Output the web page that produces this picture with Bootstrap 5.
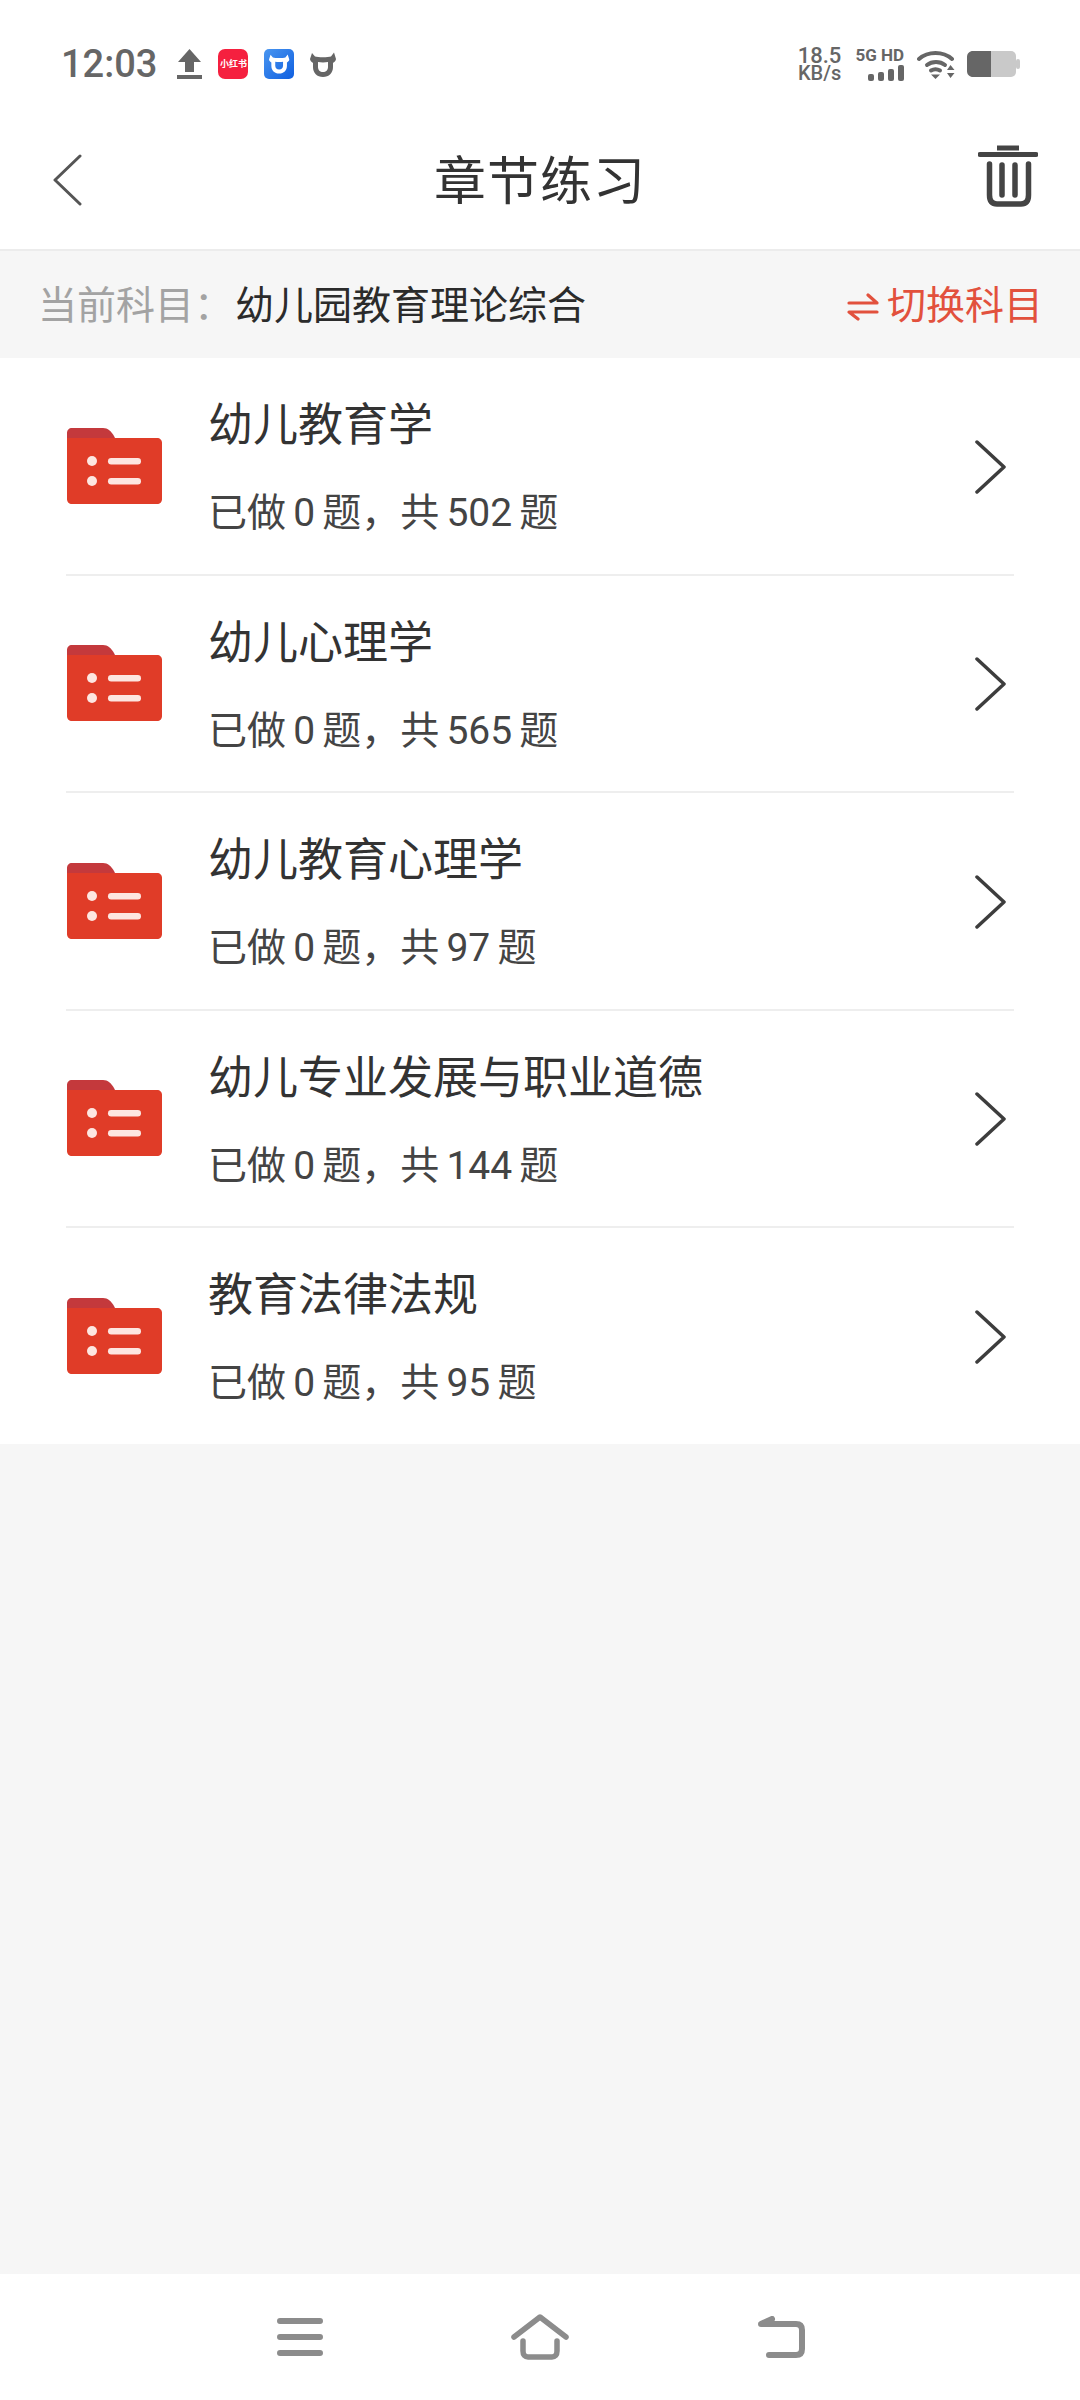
<!DOCTYPE html>
<html lang="zh-CN">
<head>
    <meta charset="UTF-8">
    <meta name="viewport" content="width=device-width, initial-scale=1.0">
    <title>章节练习</title>
    <link href="https://cdn.jsdelivr.net/npm/bootstrap@5.3.0/dist/css/bootstrap.min.css" rel="stylesheet">
    <script src="https://cdn.jsdelivr.net/npm/bootstrap@5.3.0/dist/js/bootstrap.bundle.min.js"></script>
    <style>
        html, body { height: 2400px; }
        body {
            background: #f6f6f6;
            font-family: "Roboto", "Noto Sans CJK SC", sans-serif;
            color: #333;
        }
        .screen { width: 1080px; height: 2400px; }
        .status-bar { height: 120px; background: #fff; padding: 8px 60px 0 61px; color: #666; }
        .status-time { font-size: 38px; font-weight: 500; line-height: 1; color: #666; margin-right: 4px; }
        .status-apps { gap: 16px; }
        .net-speed { font-size: 20px; font-weight: 500; line-height: 17px; text-align: center; margin-right: 14px; color: #666; }
        .net-speed b { display: block; font-size: 22px; font-weight: 500; line-height: 19px; }
        .sim-type { font-size: 17px; font-weight: 700; line-height: 16px; margin-right: 13px; text-align: right; white-space: nowrap; }
        .sim-type svg { margin-top: 2px; }
        .wifi-icon { margin-right: 12px; }
        .xhs-badge { width: 30px; height: 30px; border-radius: 7px; background: #f5203f; color: #fff; font-size: 9px; font-weight: 700; line-height: 30px; text-align: center; white-space: nowrap; }
        .top-bar { height: 131px; background: #fff; border-bottom: 2px solid #ececec; padding: 0 42px 10px 52px; }
        .top-title { top: 63px; font-size: 52px; line-height: 1; color: #333; letter-spacing: 1px; }
        .trash-icon { margin-bottom: 8px; }
        .subject-bar { height: 107px; background: #f6f6f6; padding: 4px 37px 0 38px; font-size: 39px; }
        .subject-label { color: #a3a3a3; width: 197px; }
        .subject-name { color: #2b2b2b; }
        .subject-switch { color: #e2513d; gap: 8px; }
        .chapter-list { background: #fff; height: 1086px; padding: 0 66px; }
        .chapter-row { height: 217.5px; border-bottom: 2px solid #eee; }
        .folder-slot { width: 141px; margin-left: 1px; padding-top: 2px; }
        .chapter-text { padding-top: 5px; }
        .chapter-name { font-size: 45px; line-height: 50px; color: #333; margin-bottom: 40px; }
        .chapter-stat { font-size: 39px; line-height: 44px; color: #444; word-spacing: -2.5px; }
        .chapter-arrow { margin-right: 6px; margin-top: 2px; }
        .nav-fill-space { flex: 1 1 auto; background: #f6f6f6; }
        .bottom-nav { height: 126px; background: #fff; padding: 0 275px 0 277px; }
    </style>
</head>
<body class="m-0">
<div class="screen d-flex flex-column">

    <div class="status-bar d-flex align-items-center justify-content-between">
        <div class="d-flex align-items-center status-apps">
            <span class="status-time">12:03</span>
            <svg width="25" height="30" viewBox="0 0 25 30"><path fill="#666" d="M12.500 0 24 13H17V23H8V13H1Z"/><rect y="26" width="25" height="4" fill="#666"/></svg>
            <span class="xhs-badge">小红书</span>
            <svg width="30" height="30" viewBox="0 0 30 30">
                <defs><linearGradient id="blueApp" x1="0" y1="0" x2="1" y2="1"><stop offset="0" stop-color="#4a96f0"/><stop offset="1" stop-color="#0f5fe0"/></linearGradient></defs>
                <rect width="30" height="30" rx="5" fill="url(#blueApp)"/>
                <g transform="translate(5 5) scale(.78)"><use href="#cowIcon" fill="#fff"/></g>
            </svg>
            <svg width="26" height="25" viewBox="0 0 26 25"><use href="#cowIcon" fill="#666"/></svg>
        </div>
        <div class="d-flex align-items-center">
            <div class="net-speed"><b>18.5</b>KB/s</div>
            <div class="sim-type">
                5G HD
                <svg class="d-block ms-auto" width="36" height="16" viewBox="0 0 36 16"><rect y="9" width="6" height="7" rx="2" fill="#666"/><rect x="10" y="7" width="6" height="9" rx="2" fill="#666"/><rect x="20" y="4" width="6" height="12" rx="2" fill="#666"/><rect x="30" y="0" width="6" height="16" rx="2" fill="#666"/></svg>
            </div>
            <svg class="wifi-icon" width="38" height="29" viewBox="0 0 38 29">
                <g fill="none" stroke="#666" stroke-width="4" stroke-linecap="round">
                    <path d="M2 9C11 1 26 1 35 9"/>
                    <path d="M10 15C15 11 23 11 28 15"/>
                    <path d="M14 20.500C16.500 19 20.500 19 23 20.500"/>
                </g>
                <path fill="#666" d="M14 24.500H23L18.500 29ZM30 20 33.500 15 37.500 20ZM30 23H37.500L33.500 28Z"/>
            </svg>
            <svg width="53" height="26" viewBox="0 0 53 26">
                <rect x="20" width="29" height="26" rx="5" fill="#c9c9c9"/>
                <path fill="#666" d="M6 0H24V26H6C2.500 26 0 23.500 0 20V6C0 2.500 2.500 0 6 0Z"/>
                <rect x="49" y="8" width="4" height="10" rx="2" fill="#c9c9c9"/>
            </svg>
        </div>
    </div>

    <div class="top-bar d-flex align-items-center justify-content-between position-relative">
        <svg width="32" height="52" viewBox="0 0 32 52"><path fill="none" stroke="#555" stroke-width="3" stroke-linecap="round" stroke-linejoin="round" d="M28 2 3 26 28 50"/></svg>
        <span class="top-title position-absolute start-50 translate-middle">章节练习</span>
        <svg class="trash-icon" width="60" height="62" viewBox="0 0 60 62">
            <g fill="none" stroke="#444" stroke-linecap="round" stroke-linejoin="round">
                <path stroke-width="5" d="M2 9.500H58"/>
                <path stroke-width="5" d="M19 3H41" stroke-linecap="butt"/>
                <path stroke-width="5.500" d="M11.500 19V50C11.500 56 14 59 19 59H43C48 59 50.500 56 50.500 50V19"/>
                <path stroke-width="5.500" d="M24 20V50M37 20V50"/>
            </g>
        </svg>
    </div>

    <div class="subject-bar d-flex align-items-center">
        <span class="subject-label">当前科目：</span>
        <span class="subject-name">幼儿园教育理论综合</span>
        <span class="subject-switch d-flex align-items-center ms-auto">
            <svg width="32" height="28" viewBox="0 0 32 28"><g fill="none" stroke="#e2513d" stroke-width="3.200" stroke-linecap="round" stroke-linejoin="round"><path d="M2 10H30L21 2"/><path d="M30 19H2L11 26"/></g></svg>
            切换科目
        </span>
    </div>

    <div class="chapter-list">
        <div class="chapter-row d-flex align-items-center">
            <div class="folder-slot">
                <svg class="d-block" width="96" height="78" viewBox="0 0 96 78"><use href="#folderIcon"/></svg>
            </div>
            <div class="flex-grow-1 chapter-text">
                <div class="chapter-name">幼儿教育学</div>
                <div class="chapter-stat">已做 0 题，共 502 题</div>
            </div>
            <svg class="chapter-arrow" width="34" height="54" viewBox="0 0 34 54"><use href="#arrowIcon"/></svg>
        </div>
        <div class="chapter-row d-flex align-items-center">
            <div class="folder-slot">
                <svg class="d-block" width="96" height="78" viewBox="0 0 96 78"><use href="#folderIcon"/></svg>
            </div>
            <div class="flex-grow-1 chapter-text">
                <div class="chapter-name">幼儿心理学</div>
                <div class="chapter-stat">已做 0 题，共 565 题</div>
            </div>
            <svg class="chapter-arrow" width="34" height="54" viewBox="0 0 34 54"><use href="#arrowIcon"/></svg>
        </div>
        <div class="chapter-row d-flex align-items-center">
            <div class="folder-slot">
                <svg class="d-block" width="96" height="78" viewBox="0 0 96 78"><use href="#folderIcon"/></svg>
            </div>
            <div class="flex-grow-1 chapter-text">
                <div class="chapter-name">幼儿教育心理学</div>
                <div class="chapter-stat">已做 0 题，共 97 题</div>
            </div>
            <svg class="chapter-arrow" width="34" height="54" viewBox="0 0 34 54"><use href="#arrowIcon"/></svg>
        </div>
        <div class="chapter-row d-flex align-items-center">
            <div class="folder-slot">
                <svg class="d-block" width="96" height="78" viewBox="0 0 96 78"><use href="#folderIcon"/></svg>
            </div>
            <div class="flex-grow-1 chapter-text">
                <div class="chapter-name">幼儿专业发展与职业道德</div>
                <div class="chapter-stat">已做 0 题，共 144 题</div>
            </div>
            <svg class="chapter-arrow" width="34" height="54" viewBox="0 0 34 54"><use href="#arrowIcon"/></svg>
        </div>
        <div class="chapter-row d-flex align-items-center">
            <div class="folder-slot">
                <svg class="d-block" width="96" height="78" viewBox="0 0 96 78"><use href="#folderIcon"/></svg>
            </div>
            <div class="flex-grow-1 chapter-text">
                <div class="chapter-name">教育法律法规</div>
                <div class="chapter-stat">已做 0 题，共 95 题</div>
            </div>
            <svg class="chapter-arrow" width="34" height="54" viewBox="0 0 34 54"><use href="#arrowIcon"/></svg>
        </div>
    </div>

    <div class="nav-fill-space"></div>

    <div class="bottom-nav d-flex align-items-center justify-content-between">
        <svg width="46" height="40" viewBox="0 0 46 40"><g fill="none" stroke="#8c8c8c" stroke-width="6" stroke-linecap="round"><path d="M3 4H43M3 20H43M3 36H43"/></g></svg>
        <svg width="58" height="46" viewBox="0 0 58 46"><g fill="none" stroke="#8c8c8c" stroke-width="5.500" stroke-linecap="round" stroke-linejoin="round"><path d="M3 23 29 3 55 23"/><path d="M12 27V37C12 41 14 43 17 43H41C44 43 46 41 46 37V27"/></g></svg>
        <svg width="48" height="42" viewBox="0 0 48 42"><g fill="none" stroke="#8c8c8c" stroke-width="6" stroke-linecap="round" stroke-linejoin="round"><path d="M12 39H39C43 39 45 37 45 33V14C45 10 43 8 39 8H4L15 3"/></g></svg>
    </div>
</div>

<svg width="0" height="0" class="position-absolute">
    <defs>
        <g id="folderIcon">
            <path fill="#c4393c" d="M5 0H36C41 0 44 3 47 8L50 14H0V5C0 2 2 0 5 0Z"/>
            <path fill="#e03c28" d="M0 10H90C93 10 95 12 95 15V71C95 74 93 76 90 76H5C2 76 0 74 0 71Z"/>
            <circle cx="25" cy="33" r="5" fill="#fde6e1"/>
            <circle cx="25" cy="53" r="5" fill="#fde6e1"/>
            <rect x="41" y="30" width="33" height="6.500" rx="3.200" fill="#fde6e1"/>
            <rect x="41" y="50" width="33" height="6.500" rx="3.200" fill="#fde6e1"/>
        </g>
        <path id="cowIcon" fill-rule="evenodd" d="M2 1 5 4.500C8 5.500 18 5.500 21 4.500L24 .5 26 7C26 9 24 10 23 11V15C23 21 19 25 13 25S3 21 3 15V11C2 10 0 9 0 7ZM8 10V15C8 18 10 20 13 20S18 18 18 15V10C15 10.500 11 10.500 8 10Z"/>
        <path id="arrowIcon" fill="none" stroke="#3d3d3d" stroke-width="3.500" stroke-linecap="round" stroke-linejoin="round" d="M3 2 30 27 3 52"/>
    </defs>
</svg>
</body>
</html>
